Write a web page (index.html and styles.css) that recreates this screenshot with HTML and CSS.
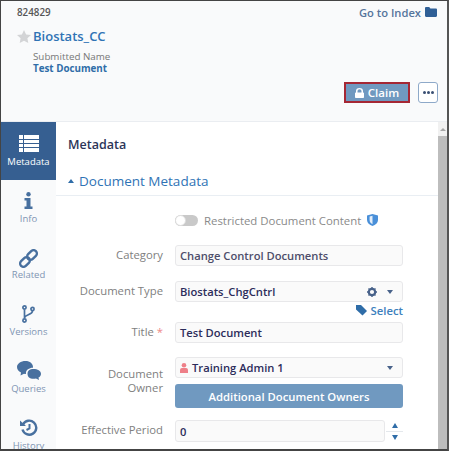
FILE: index.html
```html
<!DOCTYPE html>
<html lang="en">

<head>
    <meta charset="UTF-8">
    <title>Document</title>
    <link rel="stylesheet" href="styles.css">
</head>

<body>
    <div class="frame">
        <div class="header">
            <div class="header-top">
                <span class="doc-id">824829</span>
                <a class="index-link">Go to Index
                    <svg width="12" height="10" viewBox="0 0 12 10"><path fill="#2f5f96" d="M0 1.200C0 .5.5 0 1.200 0h3l1.200 1.400h5.400c.7 0 1.200.5 1.200 1.200v6.200c0 .7-.5 1.200-1.200 1.200H1.200C.5 10 0 9.500 0 8.800z"/></svg>
                </a>
            </div>
            <div class="title-row">
                <svg width="14" height="13" viewBox="0 0 14 13"><path fill="#d3d4d6" d="M7 0l2.100 4.400 4.900.6-3.600 3.300.9 4.700L7 10.700 2.700 13l.9-4.700L0 5l4.900-.6z"/></svg>
                <span class="doc-title">Biostats_CC</span>
            </div>
            <div class="submitted">
                <div class="submitted-label">Submitted Name</div>
                <div class="submitted-value">Test Document</div>
            </div>
            <div class="actions">
                <button class="claim-btn">
                    <svg width="9" height="10" viewBox="0 0 9 10"><path fill="#fff" d="M1 4.500V3a3.500 3 0 0 1 7 0v1.500h.2c.5 0 .8.300.8.800v3.900c0 .5-.3.800-.8.800H.8c-.5 0-.8-.3-.8-.8V5.300c0-.5.300-.8.800-.8zm1.500 0h4V3a2 1.700 0 0 0-4 0z"/></svg>
                    Claim
                </button>
                <button class="more-btn"><span></span><span></span><span></span></button>
            </div>
        </div>

        <div class="body">
            <div class="sidebar">
                <div class="tab tab-active">
                    <svg width="20" height="17" viewBox="0 0 20 17"><path fill="#fff" d="M0 0h20v4H0zM0 5h20v3H0zM0 9h20v3H0zM0 13h20v4H0z"/><path fill="#365f91" d="M4 0h1v17H4z"/></svg>
                    <span>Metadata</span>
                </div>
                <div class="tab tab-info">
                    <svg width="9" height="17" viewBox="0 0 9 17"><g fill="#48709f"><circle cx="4.500" cy="2.200" r="2.200"/><path d="M.5 6h6v8.500h2V17H.5v-2.500h2V8.500h-2z"/></g></svg>
                    <span>Info</span>
                </div>
                <div class="tab tab-related">
                    <svg width="19" height="19" viewBox="0 0 19 19"><g fill="none" stroke="#48709f" stroke-width="2.400"><rect x="-5.500" y="-3.300" width="11" height="6.600" rx="3.300" transform="translate(6 13) rotate(-45)"/><rect x="-5.500" y="-3.300" width="11" height="6.600" rx="3.300" transform="translate(13 6) rotate(-45)"/></g></svg>
                    <span>Related</span>
                </div>
                <div class="tab tab-versions">
                    <svg width="13" height="18" viewBox="0 0 13 18"><g fill="none" stroke="#48709f" stroke-width="1.700"><circle cx="2.500" cy="2.500" r="1.600"/><circle cx="2.500" cy="15.500" r="1.600"/><circle cx="10.500" cy="4" r="1.600"/><path d="M2.500 4.500v9M10.500 6c0 4-8 3.500-8 7"/></g></svg>
                    <span>Versions</span>
                </div>
                <div class="tab tab-queries">
                    <svg width="24" height="19" viewBox="0 0 24 19"><g fill="#48709f"><path d="M8.500 0C13 0 16 2.700 16 6c0 .3 0 .5-.1.800-3.800 0-7 2.300-7 5.400 0 .3 0 .5.100.8-.7 0-1.300-.1-2-.3L3.500 14.500l.5-3C1.600 10.300 0 8.300 0 6c0-3.300 3.800-6 8.500-6z"/><path d="M16.500 8c4 0 7.500 2 7.500 4.700 0 1.800-1 3-2.500 3.900l.5 2.400-3-1.600c-.8.200-1.700.300-2.500.300-4 0-6-2-6-5s2-4.700 6-4.700z"/></g></svg>
                    <span>Queries</span>
                </div>
                <div class="tab tab-history">
                    <svg width="18" height="18" viewBox="0 0 18 18"><g fill="none" stroke="#48709f"><path stroke-width="2.400" d="M3 5.500a7 7 0 1 1-.5 5"/><path stroke-width="2" d="M9.500 5v4.500l-3 1.500"/></g><path fill="#48709f" d="M0 1.500l6 5.500H0z"/></svg>
                    <span>History</span>
                </div>
            </div>

            <div class="main">
                <h1 class="page-title">Metadata</h1>
                <div class="section-head">
                    <span class="caret-up"></span>
                    <span>Document Metadata</span>
                </div>
                <div class="form">
                    <div class="row row-toggle">
                        <div class="label"></div>
                        <div class="toggle-wrap">
                            <span class="toggle"><span class="knob"></span></span>
                            <span class="toggle-text">Restricted Document Content</span>
                            <svg width="11" height="12" viewBox="0 0 11 12"><path fill="#4a90d9" d="M0 1.500L5.500 0 11 1.500V6c0 3-2.500 5-5.500 6C2.500 11 0 9 0 6z"/><path fill="#fff" d="M5.500 1.800v8.400c-1.500-.7-2.900-2-2.900-4.200V2.600z" opacity=".85"/></svg>
                        </div>
                    </div>
                    <div class="row row-category">
                        <div class="label">Category</div>
                        <div class="input input-light">Change Control Documents</div>
                    </div>
                    <div class="row row-type">
                        <div class="label">Document Type</div>
                        <div class="input">
                            <span class="grow">Biostats_ChgCntrl</span>
                            <svg class="gear" width="10" height="10" viewBox="0 0 10 10"><circle cx="5" cy="5" r="3.200" fill="none" stroke="#48628a" stroke-width="2.200"/><path stroke="#48628a" stroke-width="1.400" d="M5 0v2M5 8v2M0 5h2M8 5h2M1.500 1.500l1.300 1.300M7.200 7.200l1.300 1.300M8.500 1.500L7.200 2.800M2.800 7.200L1.500 8.500"/></svg>
                            <span class="caret-down"></span>
                        </div>
                    </div>
                    <div class="select-row">
                        <svg width="11" height="11" viewBox="0 0 11 11"><path fill="#2f6da8" d="M0 0h5l6 6-4.500 4.500L0 4.500z"/></svg>
                        <span>Select</span>
                    </div>
                    <div class="row row-title">
                        <div class="label">Title <span class="req">*</span></div>
                        <div class="input">Test Document</div>
                    </div>
                    <div class="row row-owner">
                        <div class="label label-owner">Document<br>Owner</div>
                        <div class="owner-col">
                            <div class="input">
                                <svg class="person" width="8" height="10" viewBox="0 0 8 10"><circle cx="4" cy="2.300" r="2.300" fill="#ee7f88"/><path fill="#ee7f88" d="M0 10V7.200C0 5.800 1 5 2 5h4c1 0 2 .8 2 2.200V10z"/></svg>
                                <span class="grow">Training Admin 1</span>
                                <span class="caret-down"></span>
                            </div>
                            <button class="owners-btn">Additional Document Owners</button>
                        </div>
                    </div>
                    <div class="row row-period">
                        <div class="label">Effective Period</div>
                        <div class="period-col">
                            <div class="input input-period">0</div>
                            <div class="stepper">
                                <span class="step-up"></span>
                                <span class="step-line"></span>
                                <span class="step-down"></span>
                            </div>
                        </div>
                    </div>
                </div>
            </div>

            <div class="scrollbar">
                <div class="scroll-arrow"><span></span></div>
                <div class="scroll-thumb"></div>
            </div>
        </div>
    </div>
</body>

</html>
```
FILE: styles.css
```css
* {
    box-sizing: border-box;
}

html,
body {
    margin: 0;
    height: 452px;
    overflow: hidden;
    background-color: #fff;
}

body {
    font-family: "Open Sans", "Liberation Sans", sans-serif;
}

.frame {
    width: 449px;
    height: 451px;
    border-top: 1px solid #444;
    border-left: 1px solid #444;
    border-right: 2px solid #555;
    border-bottom: 2px solid #444;
    display: flex;
    flex-direction: column;
    overflow: hidden;
}

.header {
    height: 121px;
    flex-shrink: 0;
    background-color: #f9fafb;
    border-bottom: 1px solid #eaedf1;
    padding: 3px 10px 0 16px;
}

.header-top {
    display: flex;
    justify-content: space-between;
    align-items: center;
    height: 16px;
}

.doc-id {
    font-size: 9.800px;
    font-weight: 600;
    color: #555;
}

.index-link {
    font-size: 11.200px;
    font-weight: 600;
    color: #56749c;
    display: flex;
    align-items: center;
    gap: 4px;
}

.title-row {
    display: flex;
    align-items: center;
    gap: 2px;
    margin-top: 6px;
}

.doc-title {
    font-size: 13px;
    font-weight: 600;
    color: #2f73b5;
    line-height: 20px;
}

.submitted {
    margin: 5px 0 0 16px;
    font-size: 9.800px;
    line-height: 12px;
}

.submitted-label {
    color: #777;
}

.submitted-value {
    font-weight: 700;
    color: #2f6da8;
}

.actions {
    display: flex;
    justify-content: flex-end;
    align-items: center;
    gap: 8px;
    margin: 7px -1px 0 0;
}

.claim-btn {
    width: 66px;
    height: 21px;
    padding: 0;
    background-color: #7099c0;
    border: 2px solid #a52734;
    color: #fff;
    font-family: inherit;
    font-size: 11.500px;
    font-weight: 600;
    display: flex;
    align-items: center;
    justify-content: center;
    gap: 4px;
}

.more-btn {
    width: 20px;
    height: 21px;
    padding: 0;
    background-color: #fff;
    border: 1px solid #8ea9c9;
    border-radius: 3px;
    display: flex;
    align-items: center;
    justify-content: center;
    gap: 1px;
}

.more-btn span {
    width: 3px;
    height: 3px;
    background-color: #3a4f73;
    border-radius: 50%;
}

.body {
    flex: 1;
    display: flex;
    min-height: 0;
}

.sidebar {
    width: 55px;
    flex-shrink: 0;
    background-color: #f9fafb;
    display: flex;
    flex-direction: column;
    align-items: stretch;
    font-size: 9.500px;
    color: #7f95b3;
}

.tab {
    display: flex;
    flex-direction: column;
    align-items: center;
    flex-shrink: 0;
    text-align: center;
    line-height: 13px;
}

.tab svg {
    flex-shrink: 0;
}

.tab-active {
    height: 58px;
    background-color: #365f91;
    color: #fff;
    padding-top: 13px;
    gap: 3px;
}

.tab-info {
    padding-top: 12px;
    gap: 3px;
}

.tab-related {
    padding-top: 24px;
    gap: 0;
}

.tab-versions {
    padding-top: 24px;
    gap: 2px;
}

.tab-queries {
    padding-top: 23px;
    gap: 2px;
}

.tab-history {
    padding-top: 24px;
    gap: 2px;
}

.main {
    flex: 1;
    min-width: 0;
    background-color: #fff;
}

.page-title {
    margin: 0;
    padding: 14px 0 0 12px;
    font-size: 12.500px;
    line-height: 18px;
    font-weight: 600;
    color: #2c3558;
}

.section-head {
    display: flex;
    align-items: center;
    gap: 5px;
    height: 42px;
    padding: 12px 0 0 12px;
    border-bottom: 1px solid #e9eef3;
    font-size: 13.500px;
    color: #2f73b5;
}

.caret-up {
    width: 0;
    height: 0;
    border-left: 3px solid transparent;
    border-right: 3px solid transparent;
    border-bottom: 4px solid #2f6da8;
}

.form {
    padding-top: 16px;
    font-size: 11px;
}

.row {
    display: flex;
}

.label {
    width: 107px;
    margin-right: 12px;
    text-align: right;
    color: #808080;
    font-size: 11.300px;
    line-height: 20px;
    flex-shrink: 0;
}

.req {
    color: #e88;
}

.toggle-wrap {
    display: flex;
    align-items: center;
    height: 16px;
    color: #8a8a8a;
    font-size: 11.400px;
}

.toggle {
    width: 23px;
    height: 11px;
    background-color: #c9c9c9;
    border-radius: 6px;
    margin-right: 6px;
    display: block;
}

.knob {
    display: block;
    width: 11px;
    height: 11px;
    border-radius: 50%;
    background-color: #fff;
    border: 1px solid #ddd;
}

.toggle-text {
    margin-right: 6px;
}

.input {
    width: 228px;
    height: 21px;
    display: flex;
    align-items: center;
    padding: 0 4px;
    background-color: #fafafa;
    border: 1px solid #e8e8ea;
    border-radius: 3px;
    font-size: 11.200px;
    font-weight: 600;
    color: #2c2c5a;
}

.input-light {
    color: #4e4e6a;
}

.grow {
    flex: 1;
}

.gear {
    margin-right: 10px;
}

.caret-down {
    width: 0;
    height: 0;
    margin-right: 5px;
    border-left: 3px solid transparent;
    border-right: 3px solid transparent;
    border-top: 4px solid #48628a;
}

.person {
    margin-right: 4px;
}

.row-category {
    margin-top: 17px;
}

.row-type {
    margin-top: 15px;
}

.select-row {
    width: 347px;
    margin-top: 1px;
    height: 14px;
    display: flex;
    justify-content: flex-end;
    align-items: center;
    gap: 4px;
    font-size: 11.300px;
    font-weight: 600;
    color: #3d7fbd;
}

.row-title {
    margin-top: 5px;
}

.row-owner {
    margin-top: 14px;
}

.label-owner {
    padding-top: 10px;
    line-height: 14px;
}

.owners-btn {
    display: block;
    width: 228px;
    height: 24px;
    margin-top: 6px;
    padding: 0;
    background-color: #7099c0;
    border: 0;
    border-radius: 3px;
    color: #fff;
    font-family: inherit;
    font-size: 11.300px;
    font-weight: 600;
}

.row-period {
    margin-top: 12px;
}

.period-col {
    display: flex;
    align-items: center;
}

.input-period {
    width: 210px;
    height: 22px;
}

.stepper {
    width: 18px;
    display: flex;
    flex-direction: column;
    align-items: center;
    padding-left: 1px;
    gap: 3px;
}

.step-up {
    border-left: 3px solid transparent;
    border-right: 3px solid transparent;
    border-bottom: 5px solid #2f6da8;
}

.step-line {
    width: 17px;
    height: 1px;
    background-color: #e4e8ec;
}

.step-down {
    border-left: 3px solid transparent;
    border-right: 3px solid transparent;
    border-top: 5px solid #2f6da8;
}

.scrollbar {
    width: 9px;
    flex-shrink: 0;
    display: flex;
    flex-direction: column;
    background-color: #f1f1f1;
}

.scroll-arrow {
    height: 14px;
    display: flex;
    align-items: center;
    justify-content: center;
}

.scroll-arrow span {
    border-left: 3px solid transparent;
    border-right: 3px solid transparent;
    border-bottom: 3px solid #a6a6a6;
}

.scroll-thumb {
    flex: 1;
    background-color: #bdbdbd;
}
```
